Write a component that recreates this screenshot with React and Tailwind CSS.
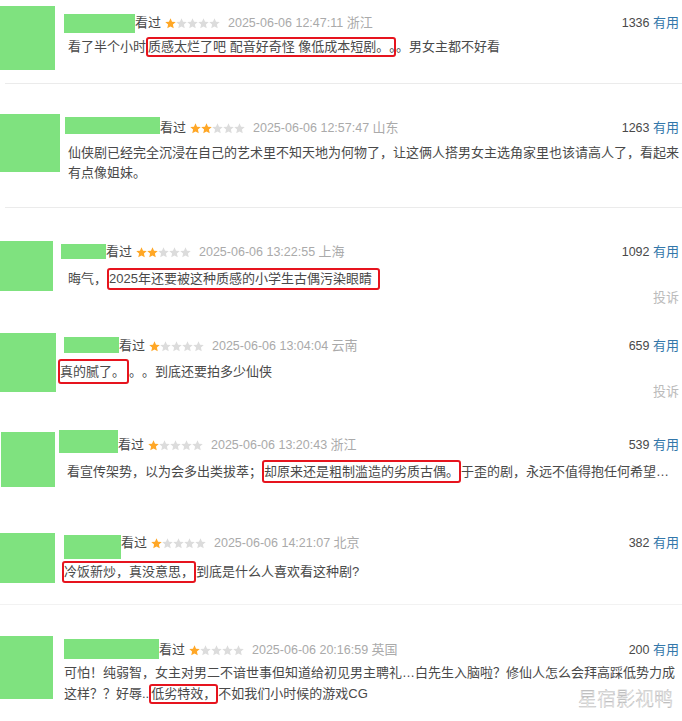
import React from 'react';

const STAR = 'M12 2l2.9 6.6 7.1.7-5.4 4.8 1.6 7.1L12 17.5l-6.2 3.7 1.6-7.1L2 9.3l7.1-.7z';

function Stars({ n }) {
  return (
    <span className="ml-[4px] inline-flex">
      {[0, 1, 2, 3, 4].map((i) => (
        <svg key={i} width="11" height="11" viewBox="1.5 1.5 21 21">
          <path d={STAR} fill={i < n ? '#ffa726' : '#dcdcdc'} />
        </svg>
      ))}
    </span>
  );
}

function Header({ nameCls, textCls, stars, date, loc, votes }) {
  return (
    <div className="flex items-start">
      <div className={`shrink-0 bg-[#7fe27f] ${nameCls}`} />
      <div className={`flex flex-1 items-center leading-[16px] ${textCls}`}>
        <span className="text-[#494949]">看过</span>
        <Stars n={stars} />
        <span className="ml-[8px] text-[12.5px] text-[#aaa]">
          {date} <span className="text-[13px]">{loc}</span>
        </span>
        <span className="ml-auto text-[12.5px] text-[#494949]">
          {votes} <span className="text-[13px] text-[#3377aa]">有用</span>
        </span>
      </div>
    </div>
  );
}

function Hl({ cls, children }) {
  return (
    <span className={`inline-block rounded-[3px] border-2 border-[#e6141e] ${cls}`}>{children}</span>
  );
}

function Report() {
  return <div className="text-right leading-[16px] text-[#bbb]">投诉</div>;
}

export default function App() {
  return (
    <div className="relative h-[721px] w-[682px] overflow-hidden bg-white font-['Liberation_Sans','Noto_Sans_CJK_SC',sans-serif] text-[13px] text-[#494949] [text-spacing-trim:space-all]">
      {/* 1 */}
      <div className="flex h-[83px]">
        <div className="mt-[6px] h-[64px] w-[55px] shrink-0 bg-[#7fe27f]" />
        <div className="flex-1 pr-[3px]">
          <div className="mt-[14px] pl-[9px]">
            <Header nameCls="w-[71px] h-[19px]" textCls="mt-[1px]" stars={1} date="2025-06-06 12:47:11" loc="浙江" votes="1336" />
          </div>
          <div className="mt-[4px] whitespace-nowrap pl-[13px] leading-[20px]">
            看了半个小时<Hl cls="leading-[16px] w-[250px]">质感太烂了吧 配音好奇怪 像低成本短剧。。</Hl>。男女主都不好看
          </div>
        </div>
      </div>
      <div className="ml-[5px] h-px bg-[#ebebeb]" />

      {/* 2 */}
      <div className="flex h-[123px]">
        <div className="mt-[30px] h-[58px] w-[60px] shrink-0 bg-[#7fe27f]" />
        <div className="flex-1 pr-[3px]">
          <div className="mt-[33px] pl-[5px]">
            <Header nameCls="w-[95px] h-[17px]" textCls="mt-[3px]" stars={2} date="2025-06-06 12:57:47" loc="山东" votes="1263" />
          </div>
          <div className="mt-[7px] whitespace-nowrap pl-[8px] leading-[20px]">
            仙侠剧已经完全沉浸在自己的艺术里不知天地为何物了，让这俩人搭男女主选角家里也该请高人了，看起来
            <br />
            有点像姐妹。
          </div>
        </div>
      </div>
      <div className="ml-[5px] h-px bg-[#ebebeb]" />

      {/* 3 */}
      <div className="flex h-[112px]">
        <div className="mt-[33px] h-[50px] w-[53px] shrink-0 bg-[#7fe27f]" />
        <div className="flex-1 pr-[3px]">
          <div className="mt-[36px] pl-[8px]">
            <Header nameCls="w-[45px] h-[15px]" textCls="" stars={2} date="2025-06-06 13:22:55" loc="上海" votes="1092" />
          </div>
          <div className="mt-[8px] whitespace-nowrap pl-[15px] leading-[22px]">
            晦气，<Hl cls="leading-[18px] pr-[6px]">2025年还要被这种质感的小学生古偶污染眼睛</Hl>
          </div>
          <Report />
        </div>
      </div>

      {/* 4 */}
      <div className="flex h-[90px]">
        <div className="mt-[13px] h-[59px] w-[56px] shrink-0 bg-[#7fe27f]" />
        <div className="flex-1 pr-[3px]">
          <div className="mt-[17px] pl-[8px]">
            <Header nameCls="w-[55px] h-[16px]" textCls="mt-[1px]" stars={1} date="2025-06-06 13:04:04" loc="云南" votes="659" />
          </div>
          <div className="mt-[5px] whitespace-nowrap pl-[2px] leading-[25px]">
            <Hl cls="leading-[21px] pr-[2px]">真的腻了。</Hl>。。到底还要拍多少仙侠
          </div>
          <Report />
        </div>
      </div>

      {/* 5 */}
      <div className="flex h-[110px]">
        <div className="ml-[1px] mt-[22px] h-[55px] w-[54px] shrink-0 bg-[#7fe27f]" />
        <div className="flex-1 pr-[3px]">
          <div className="mt-[20px] pl-[4px]">
            <Header nameCls="w-[59px] h-[23px]" textCls="mt-[7px]" stars={1} date="2025-06-06 13:20:43" loc="浙江" votes="539" />
          </div>
          <div className="mt-[7px] whitespace-nowrap pl-[12px] leading-[23px]">
            看宣传架势，以为会多出类拔萃；<Hl cls="leading-[19px]">却原来还是粗制滥造的劣质古偶。</Hl>于歪的剧，永远不值得抱任何希望…
          </div>
        </div>
      </div>

      {/* 6 */}
      <div className="flex h-[84px]">
        <div className="mt-[13px] h-[50px] w-[55px] shrink-0 bg-[#7fe27f]" />
        <div className="flex-1 pr-[3px]">
          <div className="mt-[15px] pl-[9px]">
            <Header nameCls="w-[57px] h-[24px]" textCls="" stars={1} date="2025-06-06 14:21:07" loc="北京" votes="382" />
          </div>
          <div className="mt-[2px] whitespace-nowrap pl-[7px] leading-[22px]">
            <Hl cls="leading-[18px]">冷饭新炒，真没意思，</Hl>到底是什么人喜欢看这种剧?
          </div>
        </div>
      </div>
      <div className="h-px bg-[#f2f2f2]" />

      {/* 7 */}
      <div className="flex h-[116px]">
        <div className="mt-[31px] h-[63px] w-[53px] shrink-0 bg-[#7fe27f]" />
        <div className="flex-1 pr-[3px]">
          <div className="mt-[34px] pl-[11px]">
            <Header nameCls="w-[95px] h-[20px]" textCls="mt-[3px]" stars={1} date="2025-06-06 20:16:59" loc="英国" votes="200" />
          </div>
          <div className="mt-[5px] whitespace-nowrap pl-[11px] leading-[18px]">
            可怕！纯弱智，女主对男二不谙世事但知道给初见男主聘礼…白先生入脑啦？修仙人怎么会拜高踩低势力成
          </div>
          <div className="mt-[2px] whitespace-nowrap pl-[11px] leading-[20px]">
            这样？？好辱..<Hl cls="leading-[16px]">低劣特效，</Hl>不如我们小时候的游戏CG
          </div>
        </div>
      </div>

      {/* watermark */}
      <div className="absolute bottom-[12px] right-[9px] font-['Noto_Sans_CJK_SC',sans-serif] text-[19px] font-light leading-[22px] text-white [-webkit-text-stroke:0.4px_#b4b4b4]">
        星宿影视鸭
      </div>
    </div>
  );
}
